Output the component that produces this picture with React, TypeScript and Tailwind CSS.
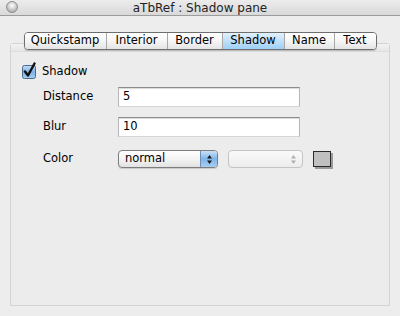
import React from 'react'

const tabs = ['Quickstamp', 'Interior', 'Border', 'Shadow', 'Name', 'Text']
const tabWidths = ['w-[81px]', 'w-[61px]', 'w-[55px]', 'w-[62px]', 'w-[50px]', 'w-[42px]']

function CheckBox() {
  return (
    <svg width="16" height="17" viewBox="0 0 16 17" className="shrink-0">
      <defs>
        <linearGradient id="cb" x1="0" y1="0" x2="0" y2="1">
          <stop offset="0" stopColor="#c4ddf6" />
          <stop offset="0.5" stopColor="#7cb2e6" />
          <stop offset="1" stopColor="#a9d0f3" />
        </linearGradient>
      </defs>
      <rect x="0.5" y="3.5" width="13" height="13" rx="2" fill="url(#cb)" stroke="#4a6a8c" />
      <path d="M3 9.5 L6 13.5 L12.5 1.5" fill="none" stroke="#111" strokeWidth="2.4" strokeLinecap="round" strokeLinejoin="round" />
    </svg>
  )
}

function Arrows({ color }: { color: string }) {
  return (
    <svg width="7" height="11" viewBox="0 0 7 11">
      <path d="M3.5 1 L6 4.5 L1 4.5 Z" fill={color} />
      <path d="M3.5 10 L6 6.5 L1 6.5 Z" fill={color} />
    </svg>
  )
}

function TextField({ value }: { value: string }) {
  return (
    <div className="w-[182px] h-[20px] bg-white border border-[#b8b8b8] border-t-[#8c8c8c] border-b-[#d6d6d6] shadow-[inset_0_1px_1px_rgba(0,0,0,0.15)] flex items-center pl-[4px]">
      {value}
    </div>
  )
}

export default function App() {
  return (
    <div
      className="w-[400px] h-[316px] bg-[#ededed] flex flex-col text-[11.5px] text-black"
      style={{ fontFamily: '"DejaVu Sans", "Liberation Sans", sans-serif' }}
    >
      {/* title bar */}
      <div className="relative h-[16px] shrink-0 bg-gradient-to-b from-[#ececec] to-[#d9d9d9] border-b border-[#9c9c9c] flex items-center justify-center">
        <div className="absolute left-[6px] top-[1px] w-[12px] h-[12px] rounded-full border border-[#8e8e8e] bg-[radial-gradient(circle_at_50%_35%,#ffffff,#c2c2c2_60%,#9a9a9a)]" />
        <span className="text-[#222] leading-none text-[12px]">aTbRef : Shadow pane</span>
      </div>

      <div className="flex flex-col px-[10px] pt-[16px]">
        {/* tabs */}
        <div className="relative z-10 flex justify-center -mb-[7px]">
          <div className="flex h-[18px] rounded-[4px] border border-[#6e6e6e] overflow-hidden shadow-[0_1px_1px_rgba(0,0,0,0.2)]">
            {tabs.map((t, i) => (
              <div
                key={t}
                className={`${tabWidths[i]} flex items-center justify-center leading-none ${
                  i > 0 ? 'border-l border-[#a8a8a8]' : ''
                } ${
                  t === 'Shadow'
                    ? 'bg-gradient-to-b from-[#e2f1fd] via-[#bfe0fa] to-[#9ed0f6]'
                    : 'bg-gradient-to-b from-white via-[#f6f6f6] to-[#e4e4e4]'
                }`}
              >
                {t}
              </div>
            ))}
          </div>
        </div>

        {/* panel */}
        <div className="h-[263px] rounded-t-[3px] border border-[#d3d3d3] bg-[#ececec] flex flex-col">
          <div className="h-[8px] bg-gradient-to-b from-[#f3f3f3] to-[#e6e6e6] border-b border-[#dddddd]" />
          <div className="flex flex-col pl-[11px] pt-[10px]">
            <div className="flex items-center gap-[4px] h-[17px]">
              <CheckBox />
              <span className="mt-[3px]">Shadow</span>
            </div>
            <div className="grid grid-cols-[75px_auto] items-center gap-y-[10px] pl-[21px] mt-[8px]">
              <span>Distance</span>
              <TextField value="5" />
              <span>Blur</span>
              <TextField value="10" />
              <span className="mt-[3px]">Color</span>
              <div className="flex items-center mt-[3px]">
                <div className="w-[100px] h-[18px] rounded-[4px] border border-[#7d7d7d] flex overflow-hidden bg-gradient-to-b from-white via-[#f4f4f4] to-[#e2e2e2] shadow-[0_1px_1px_rgba(0,0,0,0.15)]">
                  <span className="flex-1 flex items-center pl-[6px] leading-none">normal</span>
                  <span className="w-[17px] border-l border-[#6e8fb5] bg-gradient-to-b from-[#c9e1f8] via-[#7fb4e8] to-[#a6cef3] flex items-center justify-center">
                    <Arrows color="#1a1a1a" />
                  </span>
                </div>
                <div className="ml-[10px] w-[75px] h-[18px] rounded-[4px] border border-[#c4c4c4] bg-gradient-to-b from-[#fafafa] to-[#ececec] flex justify-end">
                  <span className="w-[17px] flex items-center justify-center">
                    <Arrows color="#b0b0b0" />
                  </span>
                </div>
                <div className="ml-[10px] w-[18px] h-[16px] bg-[#c0c0c0] border border-[#2a2a2a] shadow-[2px_2px_0_#9a9a9a]" />
              </div>
            </div>
          </div>
        </div>
      </div>
    </div>
  )
}
